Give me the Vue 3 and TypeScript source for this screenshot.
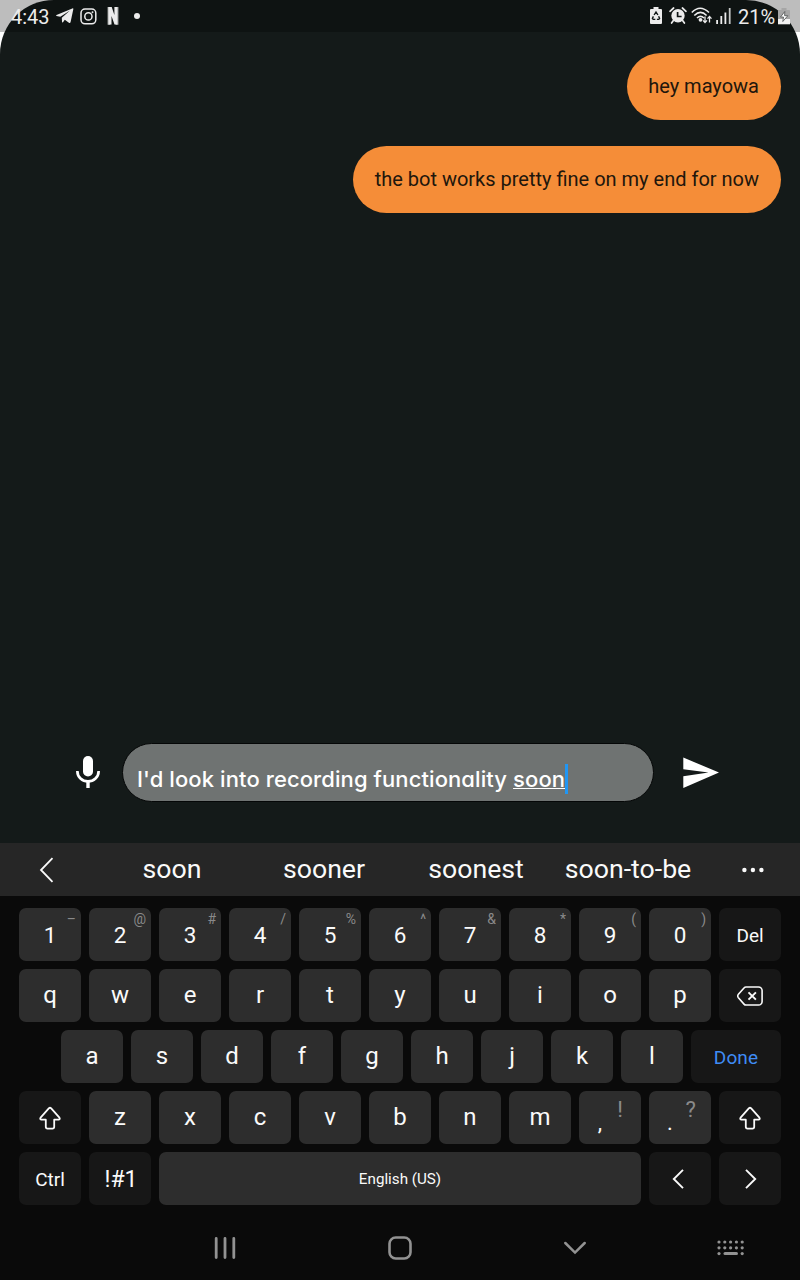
<script setup lang="ts">
interface Key {
  label?: string
  hint?: string
  kind?: string
  icon?: string
}

const messages: string[] = ['hey mayowa', 'the bot works pretty fine on my end for now']
const suggestions: string[] = ['soon', 'sooner', 'soonest', 'soon-to-be']

const letters = (s: string): Key[] => s.split('').map((label) => ({ label, kind: 'letter' }))
const hints = '–@#/%^&*()'.split('')

const rows: Key[][] = [
  [
    ...'1234567890'.split('').map((label, i) => ({ label, hint: hints[i], kind: 'digit' })),
    { label: 'Del', kind: 'fn' },
  ],
  [...letters('qwertyuiop'), { icon: 'back', kind: 'fn' }],
  [...letters('asdfghjkl'), { label: 'Done', kind: 'fn done' }],
  [
    { icon: 'shift', kind: 'fn' },
    ...letters('zxcvbnm'),
    { label: ',', hint: '!', kind: 'punct' },
    { label: '.', hint: '?', kind: 'punct' },
    { icon: 'shift', kind: 'fn' },
  ],
  [
    { label: 'Ctrl', kind: 'fn' },
    { label: '!#1', kind: 'fn sym' },
    { label: 'English (US)', kind: 'space' },
    { icon: 'left', kind: 'fn' },
    { icon: 'right', kind: 'fn' },
  ],
]

const padDots: number[][] = [0, 1].flatMap((r) => [0, 1, 2, 3, 4].map((c) => [2 + c * 5.8, 2 + r * 5.8]))
padDots.push([2, 13.6], [25.2, 13.6])
</script>

<template>
  <div class="screen">
    <div class="chat">
      <div class="messages">
        <div v-for="m in messages" :key="m" class="bubble"><span>{{ m }}</span></div>
      </div>
      <div class="composer">
        <svg class="mic" width="26" height="34" viewBox="0 0 26 34">
          <rect x="8" y="1" width="10" height="20.5" rx="5" fill="#fff" />
          <path d="M2.4 16v.5a10.6 9.9 0 0 0 21.2 0V16" fill="none" stroke="#fff" stroke-width="2.7" />
          <path d="M13 26v7" stroke="#fff" stroke-width="3.4" />
        </svg>
        <div class="field">
          <span class="typed">I'd look into recording functionality <u>soon</u></span><i class="caret"></i>
        </div>
        <svg class="send" width="37" height="32" viewBox="0 0 37 32">
          <path d="M.3.5 36 15.6.3 31V19.2L25.5 15.6.3 12.2z" fill="#fff" />
        </svg>
      </div>
    </div>

    <div class="suggest">
      <svg class="prev" width="16" height="26" viewBox="0 0 16 26">
        <path d="M13.5 1.2 2 13 13.5 24.8" fill="none" stroke="#fafafa" stroke-width="1.8" />
      </svg>
      <div class="words"><span v-for="s in suggestions" :key="s">{{ s }}</span></div>
      <svg class="more" width="22" height="6" viewBox="0 0 22 6" fill="#fafafa">
        <circle cx="2.4" cy="3" r="2.2" /><circle cx="10.900" cy="3" r="2.2" /><circle cx="19.4" cy="3" r="2.2" />
      </svg>
    </div>

    <div class="keyboard">
      <div v-for="(row, r) in rows" :key="r" class="row">
        <div v-for="(k, i) in row" :key="i" class="key" :class="k.kind">
          <span v-if="k.label" class="label">{{ k.label }}</span>
          <span v-if="k.hint" class="hint">{{ k.hint }}</span>
          <svg v-if="k.icon === 'back'" width="26" height="20" viewBox="0 0 26 20" fill="none" stroke="#fafafa" stroke-width="1.6">
            <path d="M9 1h12.5a3.6 3.6 0 0 1 3.6 3.6v10.8a3.6 3.6 0 0 1-3.6 3.6H9Q7.8 19 7 18.1L1.2 11.4Q.2 10 1.2 8.6L7 1.9Q7.8 1 9 1z" />
            <path d="m11.5 6.3 7.400 7.400m0-7.400-7.400 7.400" stroke-width="1.9" />
          </svg>
          <svg v-if="k.icon === 'shift'" class="shift" width="24" height="24" viewBox="0 0 24 24" fill="none" stroke="#fafafa" stroke-width="1.8" stroke-linejoin="round">
            <path d="M11 2.200Q12 1.400 13 2.200L21.200 11.400Q22.600 13.300 20.700 13.700H16.200V20.800Q16.200 22.600 14.400 22.600H9.600Q7.800 22.600 7.800 20.800V13.700H3.300Q1.400 13.300 2.800 11.400z" />
          </svg>
          <svg v-if="k.icon === 'left'" class="arrow-left" width="12" height="20" viewBox="0 0 12 20" fill="none" stroke="#fafafa" stroke-width="1.9">
            <path d="M11 .8 1.800 10 11 19.200" />
          </svg>
          <svg v-if="k.icon === 'right'" class="arrow-right" width="12" height="20" viewBox="0 0 12 20" fill="none" stroke="#fafafa" stroke-width="1.9">
            <path d="M1 .8 10.200 10 1 19.200" />
          </svg>
        </div>
      </div>
    </div>

    <div class="nav">
      <div>
        <svg width="22" height="22" viewBox="0 0 22 22" stroke="#929292" stroke-width="2.8" stroke-linecap="round">
          <path d="M2.2 1.5v19M11 1.5v19M19.8 1.5v19" />
        </svg>
      </div>
      <div>
        <svg width="24" height="24" viewBox="0 0 24 24" fill="none" stroke="#929292" stroke-width="2.6">
          <rect x="1.5" y="1.5" width="21" height="21" rx="6.2" />
        </svg>
      </div>
      <div>
        <svg width="24" height="14" viewBox="0 0 24 14" fill="none" stroke="#929292" stroke-width="2.5" stroke-linecap="round">
          <path d="m2.3 2 9.7 9.6L21.700 2" />
        </svg>
      </div>
      <div class="pad">
        <svg width="28" height="16" viewBox="0 0 28 16" fill="#929292">
          <circle v-for="(d, i) in padDots" :key="i" :cx="d[0]" :cy="d[1]" r="1.6" />
          <rect x="6.5" y="12.1" width="14.5" height="3" rx="1.5" />
        </svg>
      </div>
    </div>

    <div class="status">
      <span class="time">4:43</span>
      <svg class="telegram" width="18" height="16" viewBox="0 0 18 16">
        <path d="M.5 7 16.3.4Q17.6 0 17.3 1.3L14.6 14Q14.2 15.6 12.900 14.8L8.800 11.700 7 14.200Q6.200 14.900 6 13.800L5.800 9.800 14 2.500 4.300 8.800.5 7.900Q-.2 7.400.5 7z" fill="#ececec" />
      </svg>
      <svg class="insta" width="17" height="17" viewBox="0 0 17 17" fill="none" stroke="#ececec" stroke-width="1.5">
        <rect x="1" y="1" width="14.8" height="14.8" rx="4" /><circle cx="8.4" cy="8.4" r="3.6" /><circle cx="12.5" cy="4.3" r=".4" stroke-width="1.1" />
      </svg>
      <svg class="netflix" width="12" height="18" viewBox="0 0 12 18">
        <path d="M1.6 0v17.700M10.400 0v17.700" stroke="#b4b7b6" stroke-width="2" />
        <path d="M1.500 0H4.700L7.400 8V0H10.200V17.700L7.500 17.500 4.500 9V17.500L1.700 17.700z" fill="#ececec" />
      </svg>
      <i class="dot"></i>
      <div class="spacer"></div>
      <svg class="recycle" width="12" height="17" viewBox="0 0 12 17">
        <path d="M3.5 0h5v2H11Q12 2 12 3v13Q12 17 11 17H1Q0 17 0 16V3Q0 2 1 2H3.5z" fill="#ececec" />
        <path d="M4.1 8 6 5l1.900 3M8.600 9.200l1 2.200-.8 1H6.900M5.300 12.400H3.200l-.8-1 1-2" fill="none" stroke="#101616" stroke-width="1.400" />
      </svg>
      <svg class="alarm" width="18" height="17" viewBox="0 0 18 17">
        <circle cx="9" cy="8.8" r="6.7" fill="#ececec" />
        <path d="M1 4.3 4.6 1M17 4.3 13.4 1M4.2 13.7 2.6 16M13.800 13.700 15.400 16" stroke="#ececec" stroke-width="1.7" stroke-linecap="round" />
        <path d="M8.600 5v4.500h4" fill="none" stroke="#101616" stroke-width="1.7" />
      </svg>
      <svg class="wifi" width="22" height="18" viewBox="0 0 22 18" fill="none" stroke="#ececec" stroke-width="1.6">
        <path d="M.8 5.500Q9 -3 18 5.500M3.300 8.500Q9.500 2.400 15.600 8.500M6 11Q9.500 7.600 13 11" />
        <circle cx="9.5" cy="12.8" r="1.9" fill="#ececec" stroke="none" />
        <path d="M14 9.500v6M12 13.400l2 2.200 2-2.200M18.500 15.500v-6M16.500 11.600l2-2.200 2 2.200" stroke-width="1.3" />
      </svg>
      <svg class="signal" width="15" height="16" viewBox="0 0 15 16" stroke="#ececec" stroke-width="1.8">
        <path d="M1.100 12v4M5.300 8v8M9.400 4.500V16" /><path d="M13.700 0v16" stroke="#c4c7c6" />
      </svg>
      <span class="pct">21%</span>
      <svg class="battery" width="12" height="17" viewBox="0 0 12 17">
        <path d="M3.5 0h5v2H11Q12 2 12 3v8H0V3Q0 2 1 2H3.5z" fill="#a6a6a6" />
        <path d="M0 11h12v5.300H0z" fill="#f2f2f2" />
        <path d="M6.800 3.500 2.500 9h3L4.800 13.500 9.800 7.700H6.600z" fill="#fff" stroke="#4e5150" stroke-width=".8" />
      </svg>
    </div>
  </div>
</template>

<style>
body {
  background: #fff;
  overflow: hidden;
}
</style>

<style scoped>
.screen {
  position: relative;
  width: 800px;
  height: 1280px;
  display: flex;
  flex-direction: column;
  background: #fff;
  font-family: Roboto, sans-serif;
  overflow: hidden;
}
svg {
  display: block;
  flex: none;
}
.chat {
  height: 843px;
  box-sizing: border-box;
  display: flex;
  flex-direction: column;
  justify-content: space-between;
  padding: 53.4px 19px 41px;
  background: #141a19;
  border-radius: 54px 54px 0 0;
}
.messages {
  display: flex;
  flex-direction: column;
  align-items: flex-end;
  gap: 26.6px;
}
.bubble {
  height: 66.5px;
  box-sizing: border-box;
  padding: 0 22px 0 21.3px;
  border-radius: 34px;
  background: #f58d38;
  color: #21160c;
  font-size: 20px;
  line-height: 67px;
  white-space: nowrap;
}
.composer {
  display: flex;
  align-items: center;
  height: 59px;
  padding-left: 56px;
}
.mic {
  margin-top: -1px;
}
.field {
  box-sizing: border-box;
  width: 532px;
  height: 59px;
  margin: 0 29px 0 21px;
  padding: 12px 0 0 14px;
  display: flex;
  align-items: center;
  border: 1.5px solid #050707;
  border-radius: 30px;
  background: #6f7372;
  color: #fff;
}
.typed {
  font-family: Inter, sans-serif;
  font-feature-settings: 'cv11';
  font-size: 22px;
  font-weight: 500;
  letter-spacing: 0.09px;
  white-space: nowrap;
}
.typed u {
  text-underline-offset: 1px;
  text-decoration-thickness: 1.3px;
  text-decoration-skip-ink: none;
}
.caret {
  width: 2.5px;
  height: 30px;
  background: #2196f3;
}
.suggest {
  height: 53px;
  display: flex;
  align-items: center;
  background: #262626;
  color: #fafafa;
}
.prev {
  margin: 1px 41px 0 39px;
}
.words {
  width: 608px;
  display: grid;
  grid-template-columns: repeat(4, 152px);
  text-align: center;
  font-size: 26.7px;
  line-height: 55px;
  white-space: nowrap;
}
.more {
  margin-left: 37.5px;
}
.keyboard {
  box-sizing: border-box;
  height: 320px;
  padding: 12px 19px 0;
  display: flex;
  flex-direction: column;
  gap: 8px;
  background: #0a0a0a;
}
.row {
  display: flex;
  justify-content: flex-end;
  gap: 8px;
}
.key {
  position: relative;
  width: 62px;
  height: 53px;
  display: flex;
  align-items: center;
  justify-content: center;
  border-radius: 7px;
  background: #2d2d2d;
  color: #fafafa;
}
.letter .label {
  font-size: 24px;
  line-height: 51px;
  padding-bottom: 1px;
}
.digit .label {
  font-size: 22.5px;
}
.hint {
  position: absolute;
  top: 3px;
  right: 5px;
  color: #8a8a8a;
  font-size: 14px;
  line-height: 16px;
}
.fn {
  background: #171717;
  font-size: 19px;
}
.fn .label {
  padding-top: 1px;
}
.done {
  width: 90px;
  color: #3f8cf5;
}
.done .label {
  letter-spacing: 0.1px;
}
.sym {
  font-size: 23px;
}
.sym .label {
  padding-left: 2px;
}
.space {
  width: 482px;
  font-size: 15.2px;
}
.punct .label {
  font-size: 22px;
  margin: 9px 20px 0 0;
}
.punct .hint {
  top: 6px;
  right: 15px;
  font-size: 22px;
  line-height: 26px;
}
.punct:nth-child(9) .hint {
  right: 18px;
}
.arrow-left {
  margin-right: 4px;
}
.arrow-right {
  margin-left: 2px;
}
.nav {
  height: 64px;
  display: grid;
  grid-template-columns: 175px 175px 175px 137px;
  padding-left: 137.5px;
  background: #0a0a0a;
}
.nav div {
  display: flex;
  align-items: center;
  justify-content: center;
}
.status {
  position: absolute;
  inset: 0 0 auto;
  height: 32px;
  box-sizing: border-box;
  display: flex;
  align-items: center;
  padding: 0 10px 0 11px;
  background: rgba(0, 0, 0, 0.26);
  color: #ececec;
  font-size: 20px;
}
.time {
  width: 45px;
  padding-top: 2px;
}
.telegram {
  margin-right: 6px;
}
.insta {
  margin-right: 10px;
}
.netflix {
  margin: 0 15px 0 0;
}
.dot {
  width: 6px;
  height: 6px;
  border-radius: 50%;
  background: #ececec;
}
.spacer {
  flex: 1;
}
.recycle {
  margin: -1px 7px 0 0;
}
.alarm {
  margin: -1px 4px 0 0;
}
.wifi {
  margin-right: 3px;
}
.signal {
  margin-right: 7px;
}
.pct {
  width: 40px;
  padding-top: 2px;
}
</style>
